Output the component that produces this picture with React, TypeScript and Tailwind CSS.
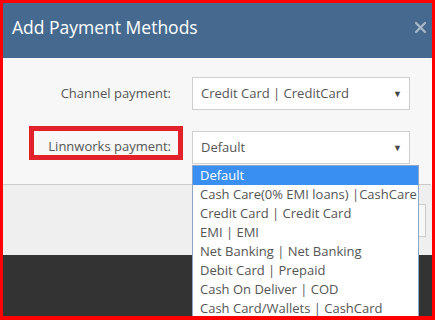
const OPTIONS = [
  "Default",
  "Cash Care(0% EMI loans) |CashCare",
  "Credit Card | Credit Card",
  "EMI | EMI",
  "Net Banking | Net Banking",
  "Debit Card | Prepaid",
  "Cash On Deliver | COD",
  "Cash Card/Wallets | CashCard",
];

function Select({ value }: { value: string }) {
  return (
    <div className="flex h-[33px] w-[218px] items-center justify-between border border-[#cfcfcf] bg-white pl-[8px] pr-[7px] text-[13px] text-[#555]">
      <span>{value}</span>
      <span className="text-[9px] text-[#444]">▼</span>
    </div>
  );
}

export default function App() {
  return (
    <div
      className="h-[320px] w-[435px] overflow-hidden bg-[#ff0000] pb-[4px] pl-[3px] pr-[3px] pt-[3px]"
      style={{ fontFamily: '"Open Sans", "Liberation Sans", sans-serif' }}
    >
      <div className="relative flex h-full w-full flex-col overflow-hidden bg-[#fafafa]">
        {/* header */}
        <div className="flex h-[55px] shrink-0 items-center justify-between bg-[#466a8f] pb-[6px] pl-[9px] pr-[5px]">
          <span className="text-[17.5px] text-white">Add Payment Methods</span>
          <svg width="11" height="11" viewBox="0 0 11 11" className="mr-[1px]">
            <path d="M1 1 L10 10 M10 1 L1 10" stroke="#a9b8c9" strokeWidth="2.2" strokeLinecap="round" />
          </svg>
        </div>

        {/* body */}
        <div className="mr-[1px] flex h-[127px] shrink-0 flex-col gap-[21px] border-b border-[#cccccc] bg-[#f7f7f7] pt-[19px]">
          <div className="flex items-center">
            <div className="w-[168px] text-right text-[13px] text-[#555]">Channel payment:</div>
            <div className="ml-[21px]">
              <Select value="Credit Card | CreditCard" />
            </div>
          </div>
          <div className="flex items-center">
            <div className="w-[168px] pb-[2px] text-right text-[13px] text-[#555]">Linnworks payment:</div>
            <div className="ml-[21px]">
              <Select value="Default" />
            </div>
          </div>
        </div>

        {/* footer */}
        <div className="flex h-[70px] shrink-0 items-center justify-end bg-[#efefef] pr-[6px]">
          <div className="h-[33px] w-[80px] border border-[#cccccc] bg-[#f7f7f7]" />
        </div>

        {/* backdrop */}
        <div className="flex-1 bg-[#333333]" />

        {/* highlight annotation */}
        <div className="absolute left-[26px] top-[123px] h-[34px] w-[154px] border-[5px] border-[#e3212b]" />

        {/* open dropdown */}
        <div className="absolute left-[189px] top-[162px] w-[227px] border border-[#8ea6c8] bg-white text-[13px] text-[#555]">
          {OPTIONS.map((o, i) => (
            <div
              key={o}
              className={
                i === 0
                  ? "h-[19px] whitespace-nowrap bg-[#3a8ff2] pl-[7px] leading-[19px] text-white"
                  : "h-[19px] whitespace-nowrap pl-[7px] leading-[19px]"
              }
            >
              {o}
            </div>
          ))}
        </div>
      </div>
    </div>
  );
}
